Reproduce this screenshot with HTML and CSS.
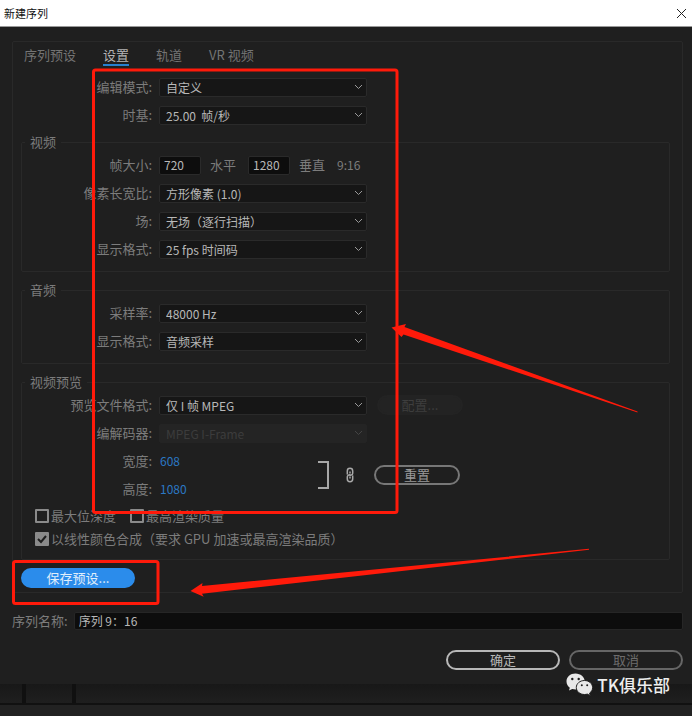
FILE: index.html
```html
<!DOCTYPE html>
<html lang="zh-CN">
<head>
    <meta charset="UTF-8">
    <meta name="viewport" content="width=device-width, initial-scale=1.0">
    <title>新建序列</title>
    <link rel="stylesheet" href="styles.css">
</head>
<body>
    <div class="dialog">
        <header class="titlebar">
            <h1>新建序列</h1>
            <button class="close" type="button" aria-label="关闭">
                <svg width="11" height="11" viewBox="0 0 11 11"><path d="M1 1l9 9M10 1l-9 9" stroke="#222" fill="none"/></svg>
            </button>
        </header>

        <form class="content">
            <div class="panel">
                <nav class="tabs">
                    <a href="#">序列预设</a>
                    <a href="#" class="active">设置</a>
                    <a href="#">轨道</a>
                    <a href="#">VR 视频</a>
                </nav>

                <div class="rows general">
                    <div class="row">
                        <label for="modo">编辑模式:</label>
                        <select id="modo"><option>自定义</option></select>
                    </div>
                    <div class="row">
                        <label for="base">时基:</label>
                        <select id="base"><option>25.00&nbsp; 帧/秒</option></select>
                    </div>
                </div>

                <fieldset>
                    <legend>视频</legend>
                    <div class="rows">
                        <div class="row">
                            <label for="largura">帧大小:</label>
                            <input class="num" id="largura" type="text" value="720">
                            <label class="unit" for="largura">水平</label>
                            <input class="num" id="altura" type="text" value="1280">
                            <label class="unit" for="altura">垂直</label>
                            <span class="ratio">9:16</span>
                        </div>
                        <div class="row">
                            <label for="pixel">像素长宽比:</label>
                            <select id="pixel"><option>方形像素 (1.0)</option></select>
                        </div>
                        <div class="row">
                            <label for="campos">场:</label>
                            <select id="campos"><option>无场（逐行扫描）</option></select>
                        </div>
                        <div class="row">
                            <label for="exibe-video">显示格式:</label>
                            <select id="exibe-video"><option>25 fps 时间码</option></select>
                        </div>
                    </div>
                </fieldset>

                <fieldset>
                    <legend>音频</legend>
                    <div class="rows">
                        <div class="row">
                            <label for="taxa">采样率:</label>
                            <select id="taxa"><option>48000 Hz</option></select>
                        </div>
                        <div class="row">
                            <label for="exibe-audio">显示格式:</label>
                            <select id="exibe-audio"><option>音频采样</option></select>
                        </div>
                    </div>
                </fieldset>

                <fieldset class="preview">
                    <legend>视频预览</legend>
                    <div class="rows">
                        <div class="row">
                            <label for="arquivo">预览文件格式:</label>
                            <select id="arquivo"><option>仅 I 帧 MPEG</option></select>
                            <button class="pill config" type="button" disabled>配置...</button>
                        </div>
                        <div class="row">
                            <label for="codec">编解码器:</label>
                            <select id="codec" disabled><option>MPEG I-Frame</option></select>
                        </div>
                        <div class="size">
                            <div class="rows values">
                                <div class="row">
                                    <label for="prev-l">宽度:</label>
                                    <input class="hot" id="prev-l" type="text" value="608">
                                </div>
                                <div class="row">
                                    <label for="prev-a">高度:</label>
                                    <input class="hot" id="prev-a" type="text" value="1080">
                                </div>
                            </div>
                            <div class="bracket"></div>
                            <svg class="chain" width="10" height="16" viewBox="0 0 10 16">
                                <path d="M2.300 7.500V4a2.700 2.700 0 0 1 5.400 0v2.200a2.200 2.200 0 0 1-3.200 1.800M7.700 8.500V12a2.700 2.700 0 0 1-5.400 0V9.800a2.200 2.200 0 0 1 3.200-1.800M5 4.500v2M5 9.500v2" fill="none" stroke="#a8a8a8" stroke-width="1.500"/>
                            </svg>
                            <button class="pill reset" type="button">重置</button>
                        </div>
                    </div>
                    <div class="checks">
                        <label><input type="checkbox">最大位深度</label>
                        <label><input type="checkbox">最高渲染质量</label>
                    </div>
                    <div class="checks">
                        <label><input type="checkbox" checked>以线性颜色合成（要求 GPU 加速或最高渲染品质）</label>
                    </div>
                </fieldset>

                <button class="pill save" type="button">保存预设...</button>
            </div>

            <div class="name">
                <label for="nome">序列名称:</label>
                <input id="nome" type="text" value="序列 9：16">
            </div>

            <div class="actions">
                <button class="pill ok" type="button">确定</button>
                <button class="pill cancel" type="button">取消</button>
            </div>
        </form>
    </div>

    <div class="timeline">
        <div class="tracks"><span></span><span></span></div>
    </div>

    <svg class="marks" width="692" height="716" viewBox="0 0 692 716">
        <g fill="none" stroke="#ff1a0a" stroke-width="3">
            <rect x="93.500" y="70" width="303.500" height="442.500" rx="2"/>
            <rect x="13.500" y="561.500" width="144.500" height="42" rx="2"/>
        </g>
        <g fill="#ff1a0a">
            <path d="M391.500 327.500L406 324l-1.500 3L637.500 411.500v1L403.500 334.500l-2 2.500z"/>
            <path d="M190.500 591L202.500 583l-.5 3L589 548.800v1L202 593.700l1.700 3z"/>
        </g>
    </svg>

    <div class="brand">
        <svg width="27" height="24" viewBox="0 0 27 24">
            <path fill="#e8e8e8" d="M9.500 0.500C4.300 0.500 0.500 4 0.500 8.500c0 2.500 1.300 4.700 3.300 6.200L3 17.500l3.200-1.600c1.200.3 2.300.5 3.500.5 5-.2 9-3.700 9-8S14.500.5 9.500.5z"/>
            <path fill="#e8e8e8" stroke="#1f1f1f" d="M18.500 7.500c-4.600 0-8.200 3.100-8.200 7s3.600 7 8.200 7c1 0 2-.2 2.900-.4l2.900 1.700-.8-2.600c1.900-1.300 3.100-3.300 3.100-5.600 0-4-3.600-7.100-8.100-7.100z"/>
            <g fill="#1f1f1f">
                <circle cx="6.300" cy="6" r="1.200"/><circle cx="12.700" cy="6" r="1.200"/>
                <circle cx="15.800" cy="12.300" r="1"/><circle cx="21.200" cy="12.300" r="1"/>
            </g>
        </svg>
        <span>TK俱乐部</span>
    </div>
</body>
</html>
```
FILE: styles.css
```css
* {
    box-sizing: border-box;
}

body {
    margin: 0;
    min-height: 100vh;
    display: flex;
    flex-direction: column;
    position: relative;
    background: #222;
    color: #7c7c7c;
    font: 13px/20px "Noto Sans CJK SC", sans-serif;
}

input, select, button {
    font: inherit;
    font-size: 12px;
    color: inherit;
    margin: 0;
}

.dialog {
    background: #1f1f1f;
    padding-bottom: 14px;
}

/* title bar */
.titlebar {
    display: flex;
    justify-content: space-between;
    align-items: center;
    height: 27px;
    padding: 0 5px 0 4px;
    background: #fff;
    border-bottom: 1px solid #999;
}

.titlebar h1 {
    margin: 0;
    font-size: 11px;
    font-weight: normal;
    color: #111;
}

.close {
    display: flex;
    padding: 0;
    border: 0;
    background: none;
}

.content {
    padding: 14px 9px 0 12px;
}

.panel {
    border: 1px solid #292929;
    border-radius: 2px;
    padding: 4px 12px 4px 8px;
}

/* tabs */
.tabs {
    display: flex;
    gap: 27px;
    padding-left: 3px;
}

.tabs a {
    height: 20px;
    line-height: 18px;
    color: #747474;
    text-decoration: none;
}

.tabs .active {
    color: #b4b4b4;
    border-bottom: 2px solid #2680d0;
}

/* form rows */
.rows {
    display: flex;
    flex-direction: column;
    gap: 8px;
}

.general {
    padding: 11px 1px 7px;
}

.row {
    display: flex;
    align-items: center;
    height: 20px;
}

.row label:first-child {
    width: 130px;
    margin-right: 7px;
    text-align: right;
}

fieldset {
    margin: 0 0 8px;
    padding: 3px 0 12px;
    border: 1px solid #292929;
    border-radius: 2px;
    min-width: 0;
}

legend {
    margin-left: 3px;
    padding: 0 5px;
}

select {
    appearance: none;
    width: 208px;
    height: 19px;
    padding: 0 20px 0 6px;
    border: 1px solid #2a2a2a;
    border-radius: 2px;
    line-height: 17px;
    color: #b8b8b8;
    background: #161616 url("data:image/svg+xml,%3Csvg xmlns='http://www.w3.org/2000/svg' width='9' height='6'%3E%3Cpath d='M1 1l3.500 3.500L8 1' fill='none' stroke='%23999'/%3E%3C/svg%3E") no-repeat right 3px center;
}

select:disabled {
    opacity: 1;
    color: #3c3c3c;
    border-color: #242424;
    background-color: #242424;
    background-image: url("data:image/svg+xml,%3Csvg xmlns='http://www.w3.org/2000/svg' width='9' height='6'%3E%3Cpath d='M1 1l3.500 3.500L8 1' fill='none' stroke='%23444'/%3E%3C/svg%3E");
}

.num {
    width: 42px;
    height: 19px;
    padding: 0 4px;
    border: 1px solid #2a2a2a;
    border-radius: 2px;
    background: #0d0d0d;
    color: #b8b8b8;
}

.unit {
    margin: 0 12px 0 9px;
}

.ratio {
    font-size: 12px;
}

/* buttons */
.pill {
    height: 20px;
    padding: 0;
    font-size: 13px;
    line-height: 16px;
    border: 2px solid;
    border-radius: 10px;
    background: none;
}

.config {
    width: 86px;
    margin-left: 10px;
    border-color: #232323;
    background: #232323;
    color: #3e3e3e;
}

.reset {
    width: 86px;
    border-color: #777;
    color: #999;
}

.save {
    display: block;
    width: 114px;
    border-color: #2b8ceb;
    background: #2b8ceb;
    color: #e0eefb;
}

/* preview size */
.size {
    display: flex;
    align-items: center;
}

.values {
    width: 296px;
}

.hot {
    width: 60px;
    padding: 0 1px;
    border: 0;
    background: none;
    color: #2b78c4;
}

.bracket {
    width: 11px;
    height: 28px;
    border: 2px solid #a8a8a8;
    border-left: 0;
}

.chain {
    margin: 0 19px 0 16px;
}

.preview {
    padding-bottom: 10px;
}

.checks {
    display: flex;
    gap: 14px;
    padding: 7px 0 0 13px;
}

.checks + .checks {
    padding-top: 3px;
}

.checks label {
    display: flex;
    align-items: center;
    gap: 2px;
}

.checks input {
    appearance: none;
    width: 14px;
    height: 14px;
    border: 2px solid #8a8a8a;
    border-radius: 1px;
}

.checks input:checked {
    background: #8a8a8a url("data:image/svg+xml,%3Csvg xmlns='http://www.w3.org/2000/svg' width='10' height='10'%3E%3Cpath d='M1 5l3 3 5-6' fill='none' stroke='%231f1f1f' stroke-width='2'/%3E%3C/svg%3E") no-repeat center;
}

/* name and actions */
.name {
    display: flex;
    align-items: center;
    gap: 6px;
    margin-top: 18px;
}

.name input {
    flex: 1;
    min-width: 0;
    height: 18px;
    padding: 0 4px;
    border: 1px solid #262626;
    border-radius: 2px;
    background: #0d0d0d;
    color: #b8b8b8;
}

.actions {
    display: flex;
    justify-content: flex-end;
    gap: 9px;
    margin-top: 19px;
}

.actions .pill {
    width: 114px;
}

.ok {
    border-color: #b8b8b8;
    color: #b8b8b8;
}

.cancel {
    border-color: #666;
    color: #6c6c6c;
}

/* window behind the dialog */
.timeline {
    flex: 1;
}

.tracks {
    display: flex;
    gap: 46px;
    height: 21px;
    padding-left: 22px;
    border-bottom: 2px solid #111;
    background: linear-gradient(#181818, #1f1f1f);
}

.tracks span {
    width: 4px;
    background: #101010;
}

.marks {
    position: absolute;
    top: 0;
    left: 0;
    pointer-events: none;
}

.brand {
    position: absolute;
    right: 22px;
    bottom: 19px;
    display: flex;
    align-items: center;
    gap: 4px;
    color: #eee;
    font: 500 17px/24px "Noto Sans CJK SC", sans-serif;
}
```
